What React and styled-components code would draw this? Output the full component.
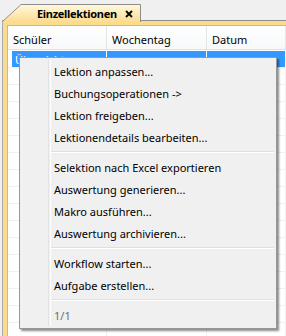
import React from 'react'
import styled, { createGlobalStyle } from 'styled-components'

const GlobalStyle = createGlobalStyle`
  html, body {
    margin: 0;
    padding: 0;
    background: #f0f0f0;
    font-family: "Noto Sans", "Liberation Sans", sans-serif;
    font-size: 11px;
    color: #000;
  }
`

const Screen = styled.div`
  width: 286px;
  height: 336px;
  position: relative;
  overflow: hidden;
  background: #f0f0f0;
`

const TabStrip = styled.div`
  display: flex;
  align-items: flex-end;
  height: 20px;
  padding-left: 2px;
`

const Tab = styled.div`
  position: relative;
  z-index: 1;
  width: 140px;
  height: 18px;
  margin-bottom: -2px;
  display: flex;
  align-items: center;
`

const TabShape = styled.svg`
  position: absolute;
  left: 0;
  top: 0;
`

const TabLabel = styled.span`
  position: relative;
  margin-left: 35px;
  font-weight: bold;
  font-size: 11px;
  letter-spacing: -0.3px;
  padding-top: 1px;
`

const TabClose = styled.svg`
  position: relative;
  margin-left: 8px;
  margin-top: 2px;
`

const Frame = styled.div`
  margin-left: 2px;
  height: 316px;
  box-sizing: border-box;
  border-top: 1px solid #8e8e8e;
  border-left: 1px solid #a9a9a9;
  background: #fbdc8f;
  padding: 4px 0 0 4px;
`

const Inner = styled.div`
  height: 100%;
  box-sizing: border-box;
  border-top: 1px solid #b9b9b9;
  border-left: 1px solid #b9b9b9;
  background: #fff;
`

const HeaderRow = styled.div`
  display: grid;
  grid-template-columns: 99px 100px 1fr;
  height: 24px;
  box-sizing: border-box;
  border-bottom: 1px solid #e3e3e3;
  background: linear-gradient(#ffffff, #f7f8fa);
`

const HeaderCell = styled.div`
  display: flex;
  align-items: center;
  padding: 3px 0 0 5px;
  border-right: 1px solid #e5e5e5;
`

const Rows = styled.div`
  padding-top: 1px;
`

const Row = styled.div`
  display: grid;
  grid-template-columns: 95px 100px 1fr;
  height: 17px;
  box-sizing: border-box;
  padding-left: 4px;
  border-bottom: 1px solid #f0f0f0;
`

const Cell = styled.div`
  display: flex;
  align-items: center;
  padding-left: 3px;
  color: ${p => (p.$selected ? '#fff' : '#000')};
  background: ${p => (p.$selected ? '#3399ff' : 'transparent')};
  border-right: 1px solid ${p => (p.$selected ? '#ffffff' : '#f0f0f0')};
`

const Menu = styled.div`
  position: absolute;
  left: 19px;
  top: 57px;
  width: 258px;
  box-sizing: border-box;
  padding: 2px;
  border: 1px solid #979797;
  background: #f0f0f0;
  box-shadow: 2px 2px 2px rgba(0, 0, 0, 0.45);
  z-index: 5;
`

const Gutter = styled.div`
  position: absolute;
  left: 28px;
  top: 2px;
  bottom: 2px;
  width: 1px;
  border-left: 1px solid #e2e3e3;
  border-right: 1px solid #ffffff;
`

const MenuItem = styled.div`
  position: relative;
  height: 22px;
  display: flex;
  align-items: center;
  padding-left: 32px;
  color: ${p => (p.$disabled ? '#6d6d6d' : '#000')};
`

const Separator = styled.div`
  height: 8px;
  display: flex;
  align-items: center;
  padding-left: 28px;

  &::after {
    content: '';
    flex: 1;
    height: 0;
    border-top: 1px solid #e0e0e0;
    border-bottom: 1px solid #ffffff;
  }
`

const groups = [
  ['Lektion anpassen...', 'Buchungsoperationen ->', 'Lektion freigeben...', 'Lektionendetails bearbeiten...'],
  ['Selektion nach Excel exportieren', 'Auswertung generieren...', 'Makro ausführen...', 'Auswertung archivieren...'],
  ['Workflow starten...', 'Aufgabe erstellen...'],
]

export default function App() {
  const rows = Array.from({ length: 17 }, (_, i) => i)
  return (
    <Screen>
      <GlobalStyle />
      <TabStrip>
        <Tab>
          <TabShape width="140" height="18" viewBox="0 0 140 18">
            <defs>
              <linearGradient id="tabFill" x1="0" y1="0" x2="0" y2="1">
                <stop offset="0" stopColor="#fff9df" />
                <stop offset="1" stopColor="#fbdc8f" />
              </linearGradient>
            </defs>
            <path d="M0 18 L19 0.5 L138.5 0.5 L138.5 18 Z" fill="url(#tabFill)" />
            <path d="M0.5 17.5 L19 0.5 L138.5 0.5 L138.5 18" fill="none" stroke="#8e8e8e" />
          </TabShape>
          <TabLabel>Einzellektionen</TabLabel>
          <TabClose width="8" height="8" viewBox="0 0 8 8">
            <path d="M1 1 L7 7 M7 1 L1 7" stroke="#000" strokeWidth="1.8" />
          </TabClose>
        </Tab>
      </TabStrip>
      <Frame>
        <Inner>
          <HeaderRow>
            <HeaderCell>Schüler</HeaderCell>
            <HeaderCell>Wochentag</HeaderCell>
            <HeaderCell>Datum</HeaderCell>
          </HeaderRow>
          <Rows>
            {rows.map(i => (
              <Row key={i}>
                <Cell $selected={i === 0}>{i === 0 ? 'Übersicht' : ''}</Cell>
                <Cell $selected={i === 0} />
                <Cell $selected={i === 0} />
              </Row>
            ))}
          </Rows>
        </Inner>
      </Frame>
      <Menu>
        <Gutter />
        {groups.map((items, g) => (
          <React.Fragment key={g}>
            {items.map(label => (
              <MenuItem key={label}>{label}</MenuItem>
            ))}
            <Separator />
          </React.Fragment>
        ))}
        <MenuItem $disabled>1/1</MenuItem>
      </Menu>
    </Screen>
  )
}
